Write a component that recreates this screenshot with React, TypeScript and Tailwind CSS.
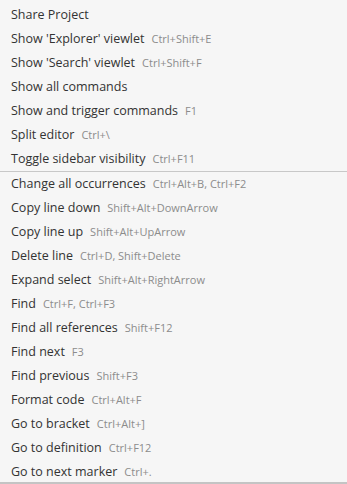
import React from 'react';

type Command = { label: string; keys?: string };

const general: Command[] = [
  { label: 'Share Project' },
  { label: "Show 'Explorer' viewlet", keys: 'Ctrl+Shift+E' },
  { label: "Show 'Search' viewlet", keys: 'Ctrl+Shift+F' },
  { label: 'Show all commands' },
  { label: 'Show and trigger commands', keys: 'F1' },
  { label: 'Split editor', keys: 'Ctrl+\\' },
  { label: 'Toggle sidebar visibility', keys: 'Ctrl+F11' },
];

const editor: Command[] = [
  { label: 'Change all occurrences', keys: 'Ctrl+Alt+B, Ctrl+F2' },
  { label: 'Copy line down', keys: 'Shift+Alt+DownArrow' },
  { label: 'Copy line up', keys: 'Shift+Alt+UpArrow' },
  { label: 'Delete line', keys: 'Ctrl+D, Shift+Delete' },
  { label: 'Expand select', keys: 'Shift+Alt+RightArrow' },
  { label: 'Find', keys: 'Ctrl+F, Ctrl+F3' },
  { label: 'Find all references', keys: 'Shift+F12' },
  { label: 'Find next', keys: 'F3' },
  { label: 'Find previous', keys: 'Shift+F3' },
  { label: 'Format code', keys: 'Ctrl+Alt+F' },
  { label: 'Go to bracket', keys: 'Ctrl+Alt+]' },
  { label: 'Go to definition', keys: 'Ctrl+F12' },
  { label: 'Go to next marker', keys: 'Ctrl+.' },
];

const Row: React.FC<{ cmd: Command }> = ({ cmd }) => (
  <div className="flex items-center h-6 px-[11px] whitespace-nowrap">
    <span className="text-[12.5px] text-[#333333]">{cmd.label}</span>
    {cmd.keys && <span className="ml-[7px] text-[11px] text-[#8c8c8c]">{cmd.keys}</span>}
  </div>
);

export default function App() {
  return (
    <div className="w-[347px] h-[484px] bg-white">
      <div
        className="h-[484px] overflow-hidden bg-[#f6f6f6] border-b-2 border-[#c4c4c4] pt-[3px]"
        style={{ fontFamily: '"Open Sans", "Noto Sans", sans-serif' }}
      >
        {general.map(c => (
          <Row key={c.label} cmd={c} />
        ))}
        <div className="h-px bg-[#c8c8c8]" />
        {editor.map(c => (
          <Row key={c.label} cmd={c} />
        ))}
      </div>
    </div>
  );
}
